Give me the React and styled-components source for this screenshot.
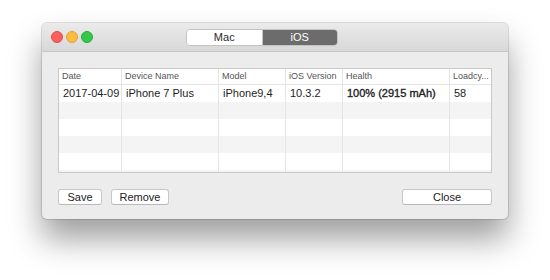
import React, { useState } from 'react';
import styled, { createGlobalStyle } from 'styled-components';

const Global = createGlobalStyle`
  html, body {
    margin: 0;
    padding: 0;
    background: #ffffff;
  }
  body {
    font-family: "Liberation Sans", Arial, sans-serif;
    -webkit-font-smoothing: antialiased;
  }
`;

const Stage = styled.div`
  width: 550px;
  height: 280px;
  padding: 23px 0 0 42px;
  box-sizing: border-box;
`;

const Window = styled.div`
  width: 466px;
  height: 196px;
  border-radius: 5px;
  overflow: hidden;
  background: #ececec;
  box-shadow: 0 0 0 1px rgba(0, 0, 0, 0.12), 0 20px 32px rgba(0, 0, 0, 0.38);
  display: flex;
  flex-direction: column;
`;

const TitleBar = styled.div`
  height: 29px;
  flex: none;
  display: flex;
  align-items: center;
  padding-left: 9px;
  background: linear-gradient(#ebebeb, #d8d8d8);
  border-bottom: 1px solid #c6c6c6;
  box-sizing: border-box;
`;

const Lights = styled.div`
  display: flex;
  gap: 3px;
  margin-top: -1px;
`;

const Light = styled.span`
  width: 12px;
  height: 12px;
  border-radius: 50%;
  box-sizing: border-box;
  background: ${p => p.$c};
  border: 1px solid ${p => p.$b};
`;

const Segmented = styled.div`
  margin-left: 93px;
  display: flex;
  height: 17px;
  border-radius: 4px;
  overflow: hidden;
  border: 1px solid #c4c4c4;
  box-sizing: border-box;
  width: 152px;
`;

const Segment = styled.button`
  flex: 1;
  border: none;
  padding: 0;
  margin: 0;
  font-family: inherit;
  font-size: 11px;
  color: ${p => (p.$active ? '#ffffff' : '#2a2a2a')};
  background: ${p => (p.$active ? '#6c6c6c' : '#ffffff')};
  & + & {
    border-left: 1px solid #c4c4c4;
  }
`;

const Content = styled.div`
  flex: 1;
  padding: 16px 16px 15px;
  display: flex;
  flex-direction: column;
`;

const Table = styled.div`
  height: 105px;
  border: 1px solid #c9c9c9;
  box-sizing: border-box;
  overflow: hidden;
  background: #ffffff;
`;

const cols = '63px 97px 67px 57px 107px 1fr';

const HeaderRow = styled.div`
  display: grid;
  grid-template-columns: ${cols};
  height: 16px;
  background: #ffffff;
  border-bottom: 1px solid #e4e4e4;
  box-sizing: border-box;
`;

const HeaderCell = styled.div`
  font-size: 9px;
  color: #555555;
  padding-left: 3px;
  line-height: 15px;
  white-space: nowrap;
  overflow: hidden;
  border-right: 1px solid #e4e4e4;
  &:last-child {
    border-right: none;
  }
`;

const Row = styled.div`
  display: grid;
  grid-template-columns: ${cols};
  height: 17px;
  background: ${p => (p.$odd ? '#f4f4f4' : '#ffffff')};
`;

const Cell = styled.div`
  font-size: 11px;
  color: #1e1e1e;
  padding-left: 4px;
  line-height: 17px;
  white-space: nowrap;
  overflow: hidden;
  border-right: 1px solid #e6e6e6;
  -webkit-text-stroke: ${p => (p.$strong ? '0.35px #1e1e1e' : '0')};
  &:last-child {
    border-right: none;
  }
`;

const Footer = styled.div`
  display: flex;
  align-items: center;
  margin-top: 16px;
  gap: 9px;
`;

const Button = styled.button`
  height: 16px;
  width: ${p => p.$w}px;
  margin-left: ${p => (p.$push ? 'auto' : '0')};
  padding: 0;
  font-family: inherit;
  font-size: 11px;
  color: #222;
  background: #ffffff;
  border: 1px solid #c8c8c8;
  border-bottom-color: #b8b8b8;
  border-radius: 3px;
  box-sizing: border-box;
  line-height: 14px;
`;

const headers = ['Date', 'Device Name', 'Model', 'iOS Version', 'Health', 'Loadcy...'];
const data = [
  { date: '2017-04-09', name: 'iPhone 7 Plus', model: 'iPhone9,4', ios: '10.3.2', health: '100% (2915 mAh)', cycles: '58' },
];

export default function App() {
  const [tab, setTab] = useState('iOS');
  const rows = [...data];
  while (rows.length < 6) rows.push(null);

  return (
    <>
      <Global />
      <Stage>
        <Window>
          <TitleBar>
            <Lights>
              <Light $c="#fc605c" $b="#de4a46" />
              <Light $c="#fdbc40" $b="#dea033" />
              <Light $c="#34c84a" $b="#27aa35" />
            </Lights>
            <Segmented>
              {['Mac', 'iOS'].map(t => (
                <Segment key={t} $active={tab === t} onClick={() => setTab(t)}>{t}</Segment>
              ))}
            </Segmented>
          </TitleBar>
          <Content>
            <Table>
              <HeaderRow>
                {headers.map(h => <HeaderCell key={h}>{h}</HeaderCell>)}
              </HeaderRow>
              {rows.map((r, i) => (
                <Row key={i} $odd={i % 2 === 1}>
                  <Cell>{r?.date}</Cell>
                  <Cell>{r?.name}</Cell>
                  <Cell>{r?.model}</Cell>
                  <Cell>{r?.ios}</Cell>
                  <Cell $strong>{r?.health}</Cell>
                  <Cell>{r?.cycles}</Cell>
                </Row>
              ))}
            </Table>
            <Footer>
              <Button $w={44}>Save</Button>
              <Button $w={58}>Remove</Button>
              <Button $w={90} $push>Close</Button>
            </Footer>
          </Content>
        </Window>
      </Stage>
    </>
  );
}
